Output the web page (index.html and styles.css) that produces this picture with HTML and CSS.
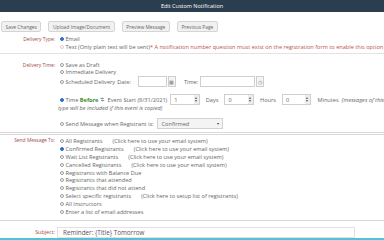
FILE: index.html
```html
<!DOCTYPE html>
<html lang="en">
<head>
    <meta charset="UTF-8">
    <title>Edit Custom Notification</title>
    <link rel="stylesheet" href="styles.css">
</head>
<body>
    <div class="titlebar">Edit Custom Notification</div>

    <div class="toolbar">
        <button>Save Changes</button>
        <button>Upload Image/Document</button>
        <button>Preview Message</button>
        <button>Previous Page</button>
    </div>

    <div class="row type">
        <div class="label">Delivery Type:</div>
        <div class="field">
            <div class="opt"><span class="radio on"></span>Email</div>
            <div class="opt"><span class="radio off"></span>Text (Only plain text will be sent) <span class="warn">* A notification number question must exist on the registration form to enable this option</span></div>
        </div>
    </div>

    <div class="row time">
        <div class="label">Delivery Time:</div>
        <div class="field">
            <div class="opt"><span class="radio"></span>Save as Draft</div>
            <div class="opt"><span class="radio"></span>Immediate Delivery</div>
            <div class="ctl-row sched">
                <span class="radio"></span>Scheduled Delivery
                <span class="date-label">Date:</span>
                <span class="box date"></span><span class="addon cal">&#9641;</span>
                <span class="time-label">Time:</span>
                <span class="box clock"></span><span class="addon">&#9719;</span>
            </div>
            <div class="ctl-row before">
                <span class="radio on"></span>Time <b class="green">Before</b>
                <svg class="swap" viewBox="0 0 10 10" width="5" height="5"><path d="M1 3h6l-2-2M9 7H3l2 2" fill="none" stroke="#3d5a3d" stroke-width="1.4"/></svg>
                Event Start (8/31/2021)
                <span class="box num">1<span class="spin"></span></span>
                <span class="unit">Days</span>
                <span class="box num">0<span class="spin"></span></span>
                <span class="unit">Hours</span>
                <span class="box num">0<span class="spin"></span></span>
                <span class="unit">Minutes</span>
                <i class="note">{messages of this</i>
            </div>
            <div class="wrapnote"><i>type will be included if this event is copied)</i></div>
            <div class="ctl-row when">
                <span class="radio"></span>Send Message when Registrant is:
                <span class="select">Confirmed<span class="caret">&#9662;</span></span>
            </div>
        </div>
    </div>

    <div class="row sendto">
        <div class="label">Send Message To:</div>
        <div class="field list">
            <div class="item"><span class="radio"></span>All Registrants<span class="link">(Click here to use your email system)</span></div>
            <div class="item"><span class="radio on"></span>Confirmed Registrants<span class="link">(Click here to use your email system)</span></div>
            <div class="item"><span class="radio"></span>Wait List Registrants<span class="link">(Click here to use your email system)</span></div>
            <div class="item"><span class="radio"></span>Cancelled Registrants<span class="link">(Click here to use your email system)</span></div>
            <div class="item"><span class="radio"></span>Registrants with Balance Due</div>
            <div class="item"><span class="radio"></span>Registrants that attended</div>
            <div class="item"><span class="radio"></span>Registrants that did not attend</div>
            <div class="item"><span class="radio"></span>Select specific registrants<span class="link">(Click here to setup list of registrants)</span></div>
            <div class="item"><span class="radio"></span>All Instructors</div>
            <div class="item"><span class="radio"></span>Enter a list of email addresses</div>
        </div>
    </div>

    <div class="row subject">
        <div class="label">Subject:</div>
        <div class="subject-input">Reminder: {Title} Tomorrow</div>
    </div>
    <div class="footer-line"></div>
</body>
</html>
```

FILE: styles.css
```css
* {
    box-sizing: border-box;
}

body {
    margin: 0;
    width: 384px;
    height: 240px;
    overflow: hidden;
    background: #fff;
    color: #666;
    font-family: 'Open Sans', sans-serif;
    font-size: 5.6px;
    white-space: nowrap;
}

.titlebar {
    height: 12px;
    line-height: 12px;
    background: #2b3e50;
    color: #fff;
    font-size: 5.5px;
    text-align: center;
}

.toolbar {
    display: flex;
    gap: 7px;
    padding: 9px 0 0 1px;
}

button {
    height: 11px;
    padding: 0 3.5px;
    font-family: inherit;
    font-size: 4.9px;
    color: #666;
    background: #f1f1f1;
    border: 1px solid #d4d4d4;
    border-radius: 2px;
}

.row {
    display: flex;
    border-bottom: 1px solid #e3e3e3;
}

.label {
    flex: none;
    width: 57px;
    padding-right: 2px;
    text-align: right;
    color: #a24c48;
    font-size: 4.9px;
}

.field {
    flex: 1;
    min-width: 0;
    padding-left: 3px;
    overflow: hidden;
}

.radio {
    display: inline-block;
    flex: none;
    width: 4px;
    height: 4px;
    margin-right: 1.5px;
    border: 0.7px solid #9a9a9a;
    border-radius: 50%;
    vertical-align: middle;
    background: #fff;
}

.radio.on {
    background: #2f6fd0;
    border-color: #2f6fd0;
}

.radio.off {
    border-color: #e8c8c8;
}

/* delivery type */
.type {
    padding: 3px 0 2px;
    line-height: 8px;
}

.type .label {
    line-height: 8px;
}

.warn {
    color: #c0504a;
}

/* delivery time */
.time {
    padding: 8px 0 3px;
    border-bottom: 3px double #d9d9d9;
}

.time .label {
    line-height: 6.5px;
}

.opt {
    display: flex;
    align-items: center;
}

.time .opt {
    height: 6.5px;
    line-height: 6.5px;
}

.ctl-row {
    display: flex;
    align-items: center;
    height: 11px;
}

.sched {
    margin-top: 1px;
}

.before {
    margin-top: 7px;
}

.when {
    margin-top: 7px;
}

.date-label {
    margin: 0 7px 0 2px;
}

.time-label {
    margin: 0 2px 0 8px;
}

.box {
    display: inline-flex;
    align-items: center;
    height: 11px;
    padding-left: 3px;
    border: 1px solid #cfcfcf;
    background: #fff;
}

.date {
    width: 29px;
}

.clock {
    width: 55px;
}

.addon {
    display: inline-flex;
    align-items: center;
    justify-content: center;
    width: 8px;
    height: 11px;
    margin-left: 1px;
    border: 1px solid #cfcfcf;
    background: #f4f4f4;
    color: #888;
    font-size: 5px;
}

.green {
    margin-left: 1.5px;
    color: #3f8a2f;
}

.swap {
    margin: 0 2.5px 0 2px;
}

.num {
    position: relative;
    width: 31px;
    margin-left: 3px;
}

.spin {
    position: absolute;
    right: 0;
    top: 0;
    bottom: 0;
    width: 5px;
    background: #ededed;
}

.spin::before,
.spin::after {
    content: '';
    position: absolute;
    left: 1px;
    border-left: 1.5px solid transparent;
    border-right: 1.5px solid transparent;
}

.spin::before {
    top: 2px;
    border-bottom: 2px solid #555;
}

.spin::after {
    bottom: 2px;
    border-top: 2px solid #555;
}

.unit {
    margin: 0 3px 0 6px;
}

.wrapnote {
    height: 6px;
    line-height: 6px;
    margin-left: -2px;
}

.select {
    display: inline-flex;
    align-items: center;
    justify-content: space-between;
    width: 66px;
    height: 11px;
    margin-left: 3px;
    padding: 0 3px 0 4px;
    border: 1px solid #d2d2d2;
    background: #f4f4f4;
}

.caret {
    color: #444;
    font-size: 4px;
}

/* send to */
.sendto {
    padding: 2px 0 4px;
    border-bottom: 1px solid #d8d8d8;
}

.sendto .label {
    line-height: 7.9px;
}

.item {
    display: flex;
    align-items: center;
    height: 7.9px;
}

.link {
    margin-left: 10px;
}

/* subject */
.subject {
    height: 17px;
    padding-top: 6px;
    border-bottom: none;
}

.subject .label {
    line-height: 10px;
    font-size: 5.4px;
}

.subject-input {
    width: 298px;
    height: 11px;
    line-height: 9px;
    padding-left: 5px;
    border: 1px solid #eadde3;
    color: #555;
    font-size: 6.3px;
}

.footer-line {
    height: 2px;
    background: #4fc3d9;
}
```
